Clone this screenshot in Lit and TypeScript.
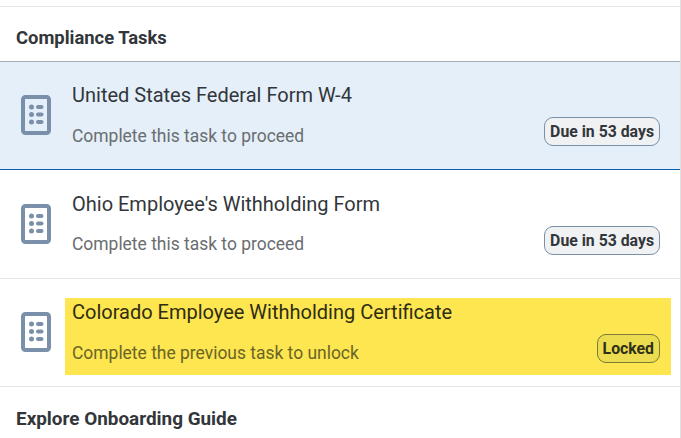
import { LitElement, html, css } from "lit";
import { customElement } from "lit/decorators.js";

const icon = html`<svg class="icon" viewBox="0 0 30 40" width="30" height="40" aria-hidden="true">
  <rect x="2" y="2" width="26" height="36" rx="2.5" fill="none" stroke="currentColor" stroke-width="4"></rect>
  <circle cx="10.5" cy="12" r="2.5" fill="currentColor"></circle>
  <rect x="15" y="10" width="7.5" height="4" rx="2" fill="currentColor"></rect>
  <circle cx="10.5" cy="19.5" r="2.5" fill="currentColor"></circle>
  <rect x="15" y="17.5" width="7.5" height="4" rx="2" fill="currentColor"></rect>
  <circle cx="10.5" cy="27" r="2.5" fill="currentColor"></circle>
  <rect x="15" y="25" width="7.5" height="4" rx="2" fill="currentColor"></rect>
</svg>`;

@customElement("app-root")
export class AppRoot extends LitElement {
  static styles = css`
    :host {
      display: block;
      width: 681px;
      height: 438px;
      overflow: hidden;
      background: #fff;
      font-family: Roboto, "Open Sans", sans-serif;
      color: #32363a;
    }
    .panel {
      box-sizing: border-box;
      height: 438px;
      padding-top: 6px;
      border-right: 1px solid #e0e0e0;
    }
    .top {
      border-top: 1px solid #e4e4e4;
    }
    .heading {
      font-size: 18.6px;
      font-weight: 700;
      line-height: 22px;
      padding-left: 16px;
    }
    .h1 {
      font-size: 18.4px;
      padding-top: 20px;
      padding-bottom: 12px;
      border-bottom: 1px solid #a3adb8;
    }
    .h2 {
      font-size: 18.9px;
      padding-top: 21px;
    }
    .row {
      box-sizing: border-box;
      height: 108px;
      display: flex;
      align-items: flex-start;
      padding: 19px 0 0 21px;
      border-bottom: 1px solid #e4e4e4;
    }
    .row.selected {
      background: #e5eff9;
      border-bottom-color: #0a5fb0;
    }
    .row.tall {
      height: 109px;
      padding-top: 20px;
    }
    .row.tall .sub {
      margin-bottom: 1px;
    }
    .icon {
      color: #7a90aa;
      flex: none;
      margin-top: 14px;
    }
    .content {
      box-sizing: border-box;
      margin-left: 14px;
      width: 606px;
      height: 77px;
      padding: 0 11px 10px 7px;
      display: flex;
      flex-direction: column;
      justify-content: space-between;
    }
    .title {
      font-size: 20px;
      line-height: 28px;
      color: #32363a;
    }
    .bottom {
      display: flex;
      align-items: flex-end;
      justify-content: space-between;
    }
    .sub {
      font-size: 17.45px;
      line-height: 24px;
      color: #6a6d70;
    }
    .badge {
      box-sizing: border-box;
      height: 29px;
      margin-bottom: 2px;
      padding: 0 5px;
      display: flex;
      align-items: center;
      border: 1px solid #7a90aa;
      border-radius: 9px;
      background: #eff1f3;
      font-size: 15.8px;
      font-weight: 700;
      color: #32363a;
    }
    .hl {
      background: #fde64f;
    }
    .hl .title {
      color: #2f2d13;
    }
    .hl .sub {
      color: #6b6427;
    }
    .hl .badge {
      background: #ecdc50;
      border-color: #7a7a3a;
      color: #2f2f18;
    }
  `;

  private row(title: string, sub: string, badge: string, cls = "", hl = "") {
    return html`<div class="row ${cls}">
      ${icon}
      <div class="content ${hl}">
        <div class="title">${title}</div>
        <div class="bottom">
          <span class="sub">${sub}</span>
          <span class="badge">${badge}</span>
        </div>
      </div>
    </div>`;
  }

  render() {
    return html`<div class="panel">
      <div class="top"></div>
      <div class="heading h1">Compliance Tasks</div>
      ${this.row("United States Federal Form W-4", "Complete this task to proceed", "Due in 53 days", "selected")}
      ${this.row("Ohio Employee's Withholding Form", "Complete this task to proceed", "Due in 53 days", "tall")}
      ${this.row("Colorado Employee Withholding Certificate", "Complete the previous task to unlock", "Locked", "", "hl")}
      <div class="heading h2">Explore Onboarding Guide</div>
    </div>`;
  }
}
